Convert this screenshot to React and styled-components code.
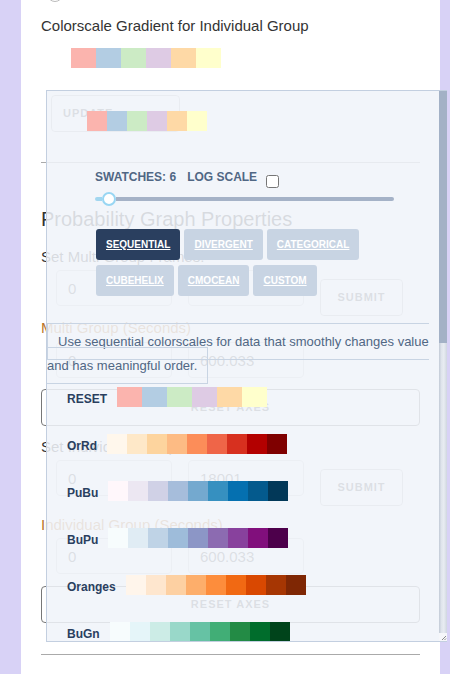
import React from 'react'
import styled, { createGlobalStyle } from 'styled-components'

const GlobalStyle = createGlobalStyle`
  html, body {
    margin: 0;
    padding: 0;
    background: #d8d2f6;
  }
  body {
    font-family: "Liberation Sans", Arial, sans-serif;
  }
`

const PASTEL = ['#fbb4ae', '#b3cde3', '#ccebc5', '#decbe4', '#fed9a6', '#ffffcc']

const SCALES = [
  { name: 'OrRd', colors: ['#fff7ec', '#fee8c8', '#fdd49e', '#fdbb84', '#fc8d59', '#ef6548', '#d7301f', '#b30000', '#7f0000'] },
  { name: 'PuBu', colors: ['#fff7fb', '#ece7f2', '#d0d1e6', '#a6bddb', '#74a9cf', '#3690c0', '#0570b0', '#045a8d', '#023858'] },
  { name: 'BuPu', colors: ['#f7fcfd', '#e0ecf4', '#bfd3e6', '#9ebcda', '#8c96c6', '#8c6bb1', '#88419d', '#810f7c', '#4d004b'] },
  { name: 'Oranges', colors: ['#fff5eb', '#fee6ce', '#fdd0a2', '#fdae6b', '#fd8d3c', '#f16913', '#d94801', '#a63603', '#7f2704'] },
  { name: 'BuGn', colors: ['#f7fcfd', '#e5f5f9', '#ccece6', '#99d8c9', '#66c2a4', '#41ae76', '#238b45', '#006d2c', '#00441b'] },
]

const TABS = ['Sequential', 'Divergent', 'Categorical', 'Cubehelix', 'cmocean', 'Custom']

/* page underneath */

const Page = styled.div`
  position: relative;
  height: 674px;
  overflow: hidden;
  padding: 0 10px 0 21px;
`

const Card = styled.div`
  display: flow-root;
  height: 100%;
  background: #fff;
  padding: 0 20px;
  color: #333;
  font-size: 15px;
`

const Knob = styled.div`
  width: 14px;
  height: 14px;
  border: 1px solid #bbb;
  border-radius: 50%;
  margin: -14px 0 0 6px;
`

const Title = styled.div`
  line-height: 18px;
  margin-top: 15px;
`

const Strip = styled.div`
  display: flex;
  margin: ${p => p.$margin};
`

const Swatch = styled.div`
  width: ${p => p.$w}px;
  height: 20px;
  background: ${p => p.$c};
`

const GhostButton = styled.div`
  box-sizing: border-box;
  height: 37px;
  border: 1px solid ${p => p.$dark ? '#777' : '#bbb'};
  border-radius: 4px;
  font-size: 11px;
  font-weight: 700;
  letter-spacing: 1px;
  line-height: 35px;
  color: #555;
  text-transform: uppercase;
`

const UpdateButton = styled(GhostButton)`
  width: 129px;
  margin: 27px 0 0 10px;
  padding-left: 11px;
`

const SubmitButton = styled(GhostButton)`
  width: 83px;
  margin-top: 9px;
  text-align: center;
`

const WideButton = styled(GhostButton)`
  margin-top: ${p => p.$top}px;
  text-align: center;
`

const Rule = styled.div`
  margin-top: ${p => p.$top}px;
  border-top: 1px solid #aaa;
`

const Heading = styled.div`
  font-size: 20px;
  line-height: 24px;
  margin-top: 44px;
`

const Label = styled.div`
  line-height: 18px;
  margin-top: ${p => p.$top}px;
  color: ${p => p.$accent ? '#b8742a' : '#333'};
`

const InputRow = styled.div`
  display: flex;
  align-items: flex-start;
  gap: 16px;
  padding-left: 15px;
  margin-top: ${p => p.$top}px;
`

const Field = styled.input`
  box-sizing: border-box;
  width: 116px;
  height: 36px;
  border: 1px solid #d1d1d1;
  border-radius: 4px;
  padding: 0 11px;
  font-family: inherit;
  font-size: 15px;
  color: #555;
  background: #fff;
  outline: none;
`

/* colorscale popover */

const Popover = styled.div`
  position: absolute;
  top: 90px;
  left: 46px;
  width: 400px;
  height: 550px;
  display: flex;
  border: 1px solid #c3cfe0;
  border-right: none;
  background: rgba(240, 244, 249, 0.87);
`

const Panel = styled.div`
  flex: 1;
  min-width: 0;
  overflow: hidden;
  color: #506784;
`

const Header = styled.div`
  display: flex;
  align-items: flex-start;
  margin: 36px 0 0 48px;
  font-size: 12px;
  font-weight: 700;
  line-height: 20px;
`

const HeaderText = styled.span`
  margin-left: ${p => p.$gap || 0}px;
  white-space: nowrap;
`

const Check = styled.input.attrs({ type: 'checkbox' })`
  flex: none;
  width: 13px;
  height: 13px;
  margin: 8px 0 0 9px;
`

const Slider = styled.div`
  display: flex;
  align-items: center;
  width: 299px;
  height: 14px;
  margin: 4px 0 0 48px;
`

const SliderFill = styled.div`
  width: 7px;
  height: 4px;
  background: #a2d6ef;
  border-radius: 2px 0 0 2px;
`

const SliderHandle = styled.div`
  box-sizing: border-box;
  width: 14px;
  height: 14px;
  border: 2px solid #98d6f3;
  border-radius: 50%;
  background: #fff;
`

const SliderRest = styled.div`
  flex: 1;
  height: 4px;
  background: #a5b2c7;
  border-radius: 0 2px 2px 0;
`

const Tabs = styled.div`
  display: flex;
  flex-wrap: wrap;
  gap: 5px 4px;
  margin: 23px 0 0 49px;
`

const Tab = styled.div`
  height: 31px;
  line-height: 31px;
  padding: 0 10px;
  border-radius: 3px;
  background: ${p => p.$active ? '#2a3f5f' : '#c8d4e3'};
  color: #fff;
  font-size: 10px;
  font-weight: 700;
  text-transform: uppercase;
  text-decoration: underline;
`

const Desc = styled.div`
  margin-top: 34px;
  font-size: 13px;
  line-height: 24px;
`

const DescText = styled.span`
  border: 1px solid #c8d4e3;
  padding: 10px;
`

const Scales = styled.div`
  margin-top: 9px;
`

const ScaleRow = styled.div`
  height: 20px;
  line-height: 0;
  font-size: 12px;
  padding-left: 20px;
  margin-bottom: 27px;
  white-space: nowrap;
`

const ScaleName = styled.span`
  font-weight: 700;
  color: #2a3f5f;
  margin-right: 10px;
  vertical-align: 4px;
`

const Cell = styled.span`
  display: inline-block;
  width: ${p => p.$w}px;
  height: 20px;
  background: ${p => p.$c};
`

const Scrollbar = styled.div`
  width: 8px;
  display: flex;
  flex-direction: column;
`

const Thumb = styled.div`
  height: 252px;
  background: #a3b1c6;
`

const Track = styled.div`
  flex: 1;
  background: linear-gradient(90deg, #c2cad6 0, #dfe4ec 30%, #e8ecf2 60%, #cfd6e0 100%);
`

const Corner = styled.div`
  height: 8px;
  background: #f6f7fa;
  display: flex;
  justify-content: flex-end;
  align-items: flex-end;
`

const FieldRow = ({ top, values, submit }) => (
  <InputRow $top={top}>
    {values.map((v, i) => <Field key={i} readOnly defaultValue={v} />)}
    {submit && <SubmitButton>Submit</SubmitButton>}
  </InputRow>
)

export default function App() {
  return (
    <>
      <GlobalStyle />
      <Page>
        <Card>
          <Knob />
          <Title>Colorscale Gradient for Individual Group</Title>
          <Strip $margin="13px 0 0 30px">
            {PASTEL.map(c => <Swatch key={c} $w={25} $c={c} />)}
          </Strip>
          <UpdateButton>Update</UpdateButton>
          <Rule $top={30} />

          <Heading>Probability Graph Properties</Heading>
          <Label $top={17}>Set Multi Group Frames:</Label>
          <FieldRow top={4} values={['0', '']} submit />
          <Label $top={3} $accent>Multi Group (Seconds)</Label>
          <FieldRow top={5} values={['0', '600.033']} />
          <WideButton $top={11} $dark>Reset Axes</WideButton>

          <Label $top={12}>Set Individual Group Frames:</Label>
          <FieldRow top={4} values={['0', '18001']} submit />
          <Label $top={10} $accent>Individual Group (Seconds)</Label>
          <FieldRow top={4} values={['0', '600.033']} />
          <WideButton $top={12} $dark>Reset Axes</WideButton>
          <Rule $top={31} />
        </Card>

        <Popover>
          <Panel>
            <Strip $margin="20px 0 0 40px">
              {PASTEL.map(c => <Swatch key={c} $w={20} $c={c} />)}
            </Strip>
            <Header>
              <HeaderText>SWATCHES: 6</HeaderText>
              <HeaderText $gap={11}>LOG SCALE</HeaderText>
              <Check />
            </Header>
            <Slider>
              <SliderFill />
              <SliderHandle />
              <SliderRest />
            </Slider>
            <Tabs>
              {TABS.map((t, i) => <Tab key={t} $active={i === 0}>{t}</Tab>)}
            </Tabs>
            <Desc>
              <DescText>Use sequential colorscales for data that smoothly changes value and has meaningful order.</DescText>
            </Desc>
            <Scales>
              <ScaleRow>
                <ScaleName>RESET</ScaleName>
                {PASTEL.map(c => <Cell key={c} $w={25} $c={c} />)}
              </ScaleRow>
              {SCALES.map(s => (
                <ScaleRow key={s.name}>
                  <ScaleName>{s.name}</ScaleName>
                  {s.colors.map((c, i) => <Cell key={i} $w={20} $c={c} />)}
                </ScaleRow>
              ))}
            </Scales>
          </Panel>
          <Scrollbar>
            <Thumb />
            <Track />
            <Corner>
              <svg width="6" height="6" viewBox="0 0 6 6">
                <path d="M5 1 L1 5 M5 3.5 L3.5 5" stroke="#8a8a8a" strokeWidth="1" />
              </svg>
            </Corner>
          </Scrollbar>
        </Popover>
      </Page>
    </>
  )
}
